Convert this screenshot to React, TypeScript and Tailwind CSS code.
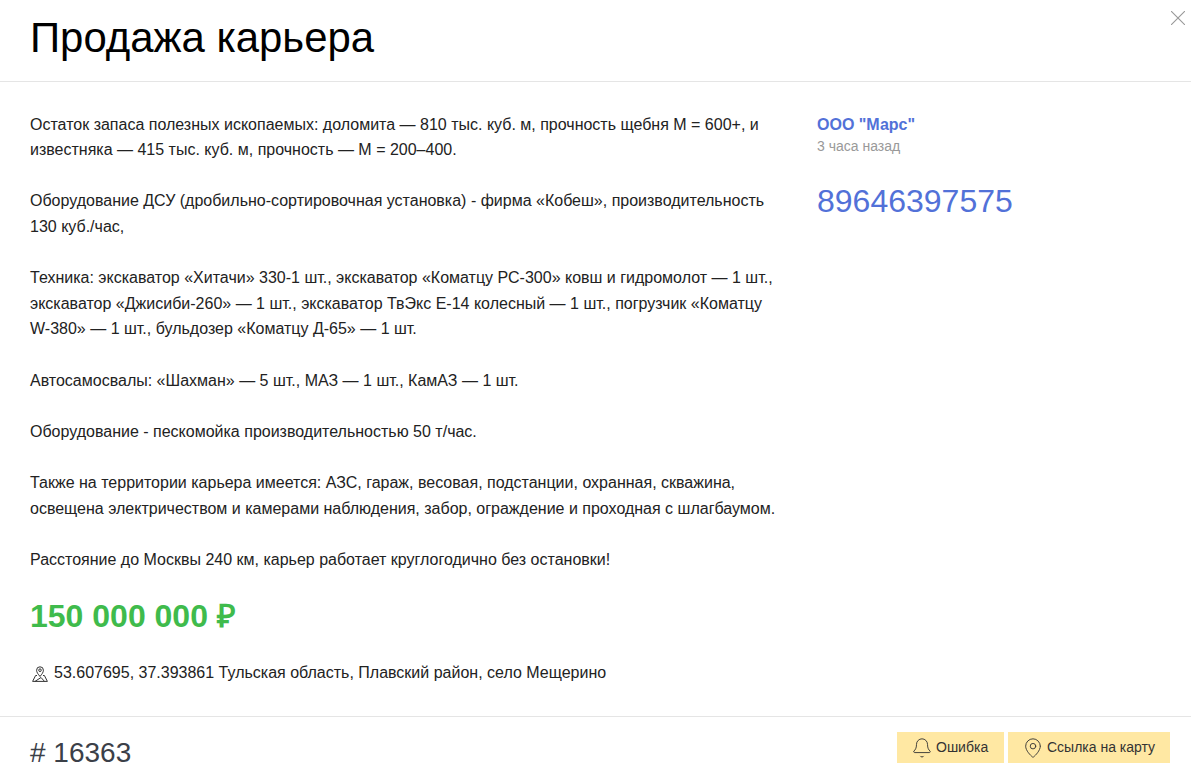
import React from "react";
import { Bell, MapPin } from "lucide-react";

const paragraphs = [
  [
    "Остаток запаса полезных ископаемых: доломита — 810 тыс. куб. м, прочность щебня М = 600+, и",
    "известняка — 415 тыс. куб. м, прочность — М = 200–400.",
  ],
  [
    "Оборудование ДСУ (дробильно-сортировочная установка) - фирма «Кобеш», производительность",
    "130 куб./час,",
  ],
  [
    "Техника: экскаватор «Хитачи» 330-1 шт., экскаватор «Коматцу РС-300» ковш и гидромолот — 1 шт.,",
    "экскаватор «Джисиби-260» — 1 шт., экскаватор ТвЭкс Е-14 колесный — 1 шт., погрузчик «Коматцу",
    "W-380» — 1 шт., бульдозер «Коматцу Д-65» — 1 шт.",
  ],
  ["Автосамосвалы: «Шахман» — 5 шт., МАЗ — 1 шт., КамАЗ — 1 шт."],
  ["Оборудование - пескомойка производительностью 50 т/час."],
  [
    "Также на территории карьера имеется: АЗС, гараж, весовая, подстанции, охранная, скважина,",
    "освещена электричеством и камерами наблюдения, забор, ограждение и проходная с шлагбаумом.",
  ],
  ["Расстояние до Москвы 240 км, карьер работает круглогодично без остановки!"],
];

function PinArea() {
  return (
    <svg width="16" height="17" viewBox="0 0 16 17" fill="none" stroke="#333" strokeWidth="1" className="shrink-0 ml-[2px]">
      <path d="M8 11.5C6 9 4.6 7.4 4.6 5.2a3.4 3.4 0 0 1 6.8 0C11.4 7.4 10 9 8 11.5z" />
      <circle cx="8" cy="5.2" r="1.3" />
      <path d="M5 10.5H3.6L.6 16.4h14.8l-3-5.9H11M3 16.4l6-3.9 3.5 3.9" />
    </svg>
  );
}

function CloseIcon() {
  return (
    <svg width="14" height="14" viewBox="0 0 14 14" fill="none" stroke="#999" strokeWidth="1.1" className="absolute right-[6px] top-[11px]">
      <path d="M0 0l14 14M14 0L0 14" />
    </svg>
  );
}

export default function App() {
  return (
    <div className="w-[1191px] h-[778px] overflow-hidden bg-white font-['Liberation_Sans',Arial,sans-serif] flex flex-col text-[#222]">
      <header className="relative h-[82px] shrink-0 border-b border-[#e5e5e5] pl-[30px] pt-[14px]">
        <h1 className="text-[41.9px] leading-[48px] text-black">Продажа карьера</h1>
        <CloseIcon />
      </header>

      <main className="flex-1 flex pl-[30px]">
        <div className="w-[787px] shrink-0 pt-[29.6px]">
          <div className="flex flex-col gap-[25.6px] text-[16px] leading-[25.6px]">
            {paragraphs.map((lines, i) => (
              <p key={i} className="whitespace-nowrap">
                {lines.map((line, j) => (
                  <span key={j} className="block">
                    {line}
                  </span>
                ))}
              </p>
            ))}
          </div>
          <div className="mt-[24px] text-[32px] leading-[40px] font-bold text-[#3fbb4c]">150 000 000 ₽</div>
          <div className="mt-[25px] flex items-center gap-[6px] text-[16px] leading-[24px]">
            <PinArea />
            <span>53.607695, 37.393861 Тульская область, Плавский район, село Мещерино</span>
          </div>
        </div>

        <aside className="pt-[34px]">
          <div className="text-[16px] leading-[18px] font-bold text-[#5271d8]">ООО "Марс"</div>
          <div className="mt-[3px] text-[14px] leading-[18px] text-[#999]">3 часа назад</div>
          <div className="mt-[26px] text-[32px] leading-[40px] text-[#5271d8]">89646397575</div>
        </aside>
      </main>

      <footer className="h-[62px] shrink-0 border-t border-[#e5e5e5] flex items-start justify-between pl-[30px] pr-[21px] pt-[15px]">
        <div className="text-[28px] leading-[42px] text-[#3b4048]"># 16363</div>
        <div className="flex gap-[4px]">
          <button className="h-[31px] w-[107px] bg-[#ffe8a3] flex items-center pl-[14px] gap-[3px] text-[14px] text-[#333]">
            <Bell size={22} strokeWidth={1} />
            Ошибка
          </button>
          <button className="h-[31px] w-[162px] bg-[#ffe8a3] flex items-center pl-[14px] gap-[3px] text-[14px] text-[#333]">
            <MapPin size={22} strokeWidth={1} />
            Ссылка на карту
          </button>
        </div>
      </footer>
    </div>
  );
}
